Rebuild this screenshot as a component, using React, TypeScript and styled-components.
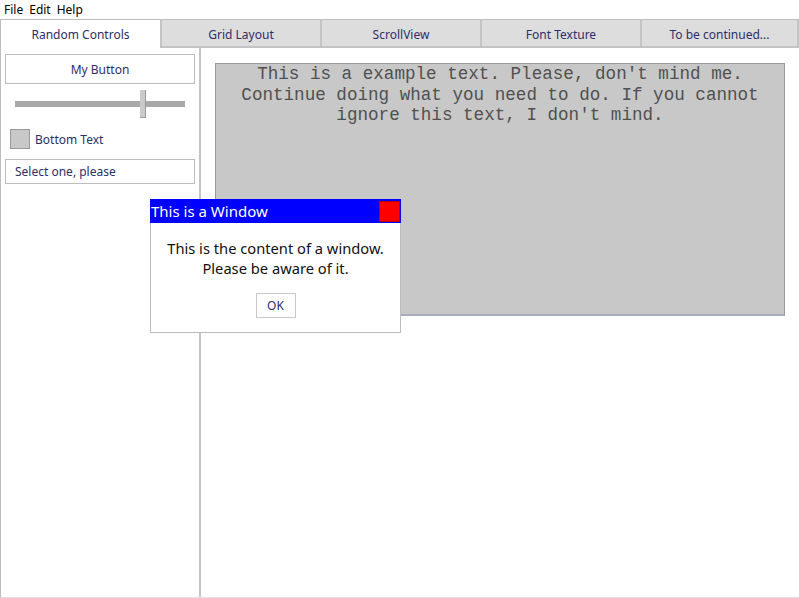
import React from "react";
import styled, { createGlobalStyle } from "styled-components";

const Global = createGlobalStyle`
  html, body { margin: 0; padding: 0; background: #fff; }
  body { font-family: "Noto Sans", "Open Sans", sans-serif; width: 799px; height: 598px; overflow: hidden; }
  * { box-sizing: border-box; }
`;

const Page = styled.div`
  position: relative;
  width: 799px;
  height: 598px;
  display: flex;
  flex-direction: column;
`;

const MenuBar = styled.div`
  height: 19px;
  display: flex;
  align-items: center;
  gap: 6px;
  padding-left: 4px;
  font-size: 12px;
  color: #000;
`;

const TabBar = styled.div`
  display: flex;
  height: 29px;
`;

const Tab = styled.div<{ $active?: boolean }>`
  width: 160px;
  flex: none;
  display: flex;
  align-items: center;
  justify-content: center;
  font-size: 12px;
  color: #2e2e6a;
  padding-top: ${(p) => (p.$active ? "0" : "2px")};
  background: ${(p) => (p.$active ? "#fff" : "#dddddd")};
  border-top: 1px solid #bdbdbd;
  border-left: ${(p) => (p.$active ? "1px solid #bdbdbd" : "2px solid #c4c4c4")};
  border-bottom: ${(p) => (p.$active ? "none" : "2px solid #c4c4c4")};
  &:last-child { width: 159px; border-right: 2px solid #c4c4c4; }
`;

const Main = styled.div`
  flex: 1;
  display: flex;
  border-left: 1px solid #bdbdbd;
  border-bottom: 1px solid #e2e2e2;
`;

const Sidebar = styled.div`
  width: 200px;
  flex: none;
  border-right: 2px solid #c4c4c4;
  padding: 6px 4px 0 4px;
  display: flex;
  flex-direction: column;
`;

const Button = styled.div`
  height: 30px;
  border: 1px solid #bdbdbd;
  background: #fff;
  display: flex;
  align-items: center;
  justify-content: center;
  font-size: 12px;
  color: #2e2e6a;
`;

const SliderWrap = styled.div`
  position: relative;
  height: 28px;
  margin: 6px 10px 0 10px;
  display: flex;
  align-items: center;
`;

const Track = styled.div`
  width: 100%;
  height: 6px;
  background: #a9a9a9;
`;

const Thumb = styled.div`
  position: absolute;
  top: 0;
  width: 6px;
  height: 28px;
  background: #cacaca;
  border: 1px solid #9a9a9a;
  border-width: 0 1px 1px 0;
`;

const CheckRow = styled.div`
  display: flex;
  align-items: center;
  gap: 5px;
  margin: 11px 0 0 5px;
  font-size: 12px;
  color: #2e2e6a;
`;

const CheckBox = styled.div`
  width: 20px;
  height: 20px;
  background: #c8c8c8;
  border: 1px solid #9a9a9a;
`;

const Select = styled.div`
  height: 25px;
  margin-top: 10px;
  border: 1px solid #bdbdbd;
  display: flex;
  align-items: center;
  padding-left: 9px;
  font-size: 12px;
  color: #2e2e6a;
`;

const Content = styled.div`
  flex: 1;
  padding: 15px 13px 0 14px;
`;

const TextBox = styled.div`
  width: 570px;
  height: 253px;
  background: #c8c8c8;
  border: 1px solid #9a9a9a;
  border-bottom: 2px solid #a8adb8;
  font-family: "Liberation Mono", "Courier New", monospace;
  font-size: 17.6px;
  line-height: 20.5px;
  color: #505050;
  text-align: center;
  padding: 0 8px;
`;

const Window = styled.div`
  position: absolute;
  left: 150px;
  top: 199px;
  width: 251px;
  height: 134px;
  background: #fff;
  border: 1px solid #bdbdbd;
  border-top: none;
  display: flex;
  flex-direction: column;
`;

const TitleBar = styled.div`
  height: 24px;
  background: #0000ff;
  display: flex;
  align-items: center;
  justify-content: space-between;
  padding: 0 1px 1px 1px;
  color: #fff;
  font-size: 15px;
  margin: 0 -1px;
`;

const CloseBox = styled.div`
  width: 21px;
  height: 21px;
  margin-top: 1px;
  background: #ff0000;
  border: 1px solid #c00000;
`;

const WindowBody = styled.div`
  flex: 1;
  display: flex;
  flex-direction: column;
  align-items: center;
  padding-top: 15px;
  font-size: 14.7px;
  line-height: 20px;
  color: #111;
  text-align: center;
`;

const OkButton = styled.div`
  margin-top: 15px;
  width: 40px;
  height: 25px;
  border: 1px solid #c8c8c8;
  display: flex;
  align-items: center;
  justify-content: center;
  font-size: 12px;
  color: #2e2e6a;
`;

export default function App() {
  const tabs = ["Random Controls", "Grid Layout", "ScrollView", "Font Texture", "To be continued..."];
  return (
    <Page>
      <Global />
      <MenuBar>
        <span>File</span>
        <span>Edit</span>
        <span>Help</span>
      </MenuBar>
      <TabBar>
        {tabs.map((t, i) => (
          <Tab key={t} $active={i === 0}>{t}</Tab>
        ))}
      </TabBar>
      <Main>
        <Sidebar>
          <Button>My Button</Button>
          <SliderWrap>
            <Track />
            <Thumb style={{ left: `${0.735 * 170}px` }} />
          </SliderWrap>
          <CheckRow>
            <CheckBox />
            <span>Bottom Text</span>
          </CheckRow>
          <Select>Select one, please</Select>
        </Sidebar>
        <Content>
          <TextBox>
            This is a example text. Please, don't mind me. Continue doing what you need to do. If you cannot ignore this text, I don't mind.
          </TextBox>
        </Content>
      </Main>
      <Window>
        <TitleBar>
          <span>This is a Window</span>
          <CloseBox />
        </TitleBar>
        <WindowBody>
          <div>This is the content of a window.</div>
          <div>Please be aware of it.</div>
          <OkButton>OK</OkButton>
        </WindowBody>
      </Window>
    </Page>
  );
}
